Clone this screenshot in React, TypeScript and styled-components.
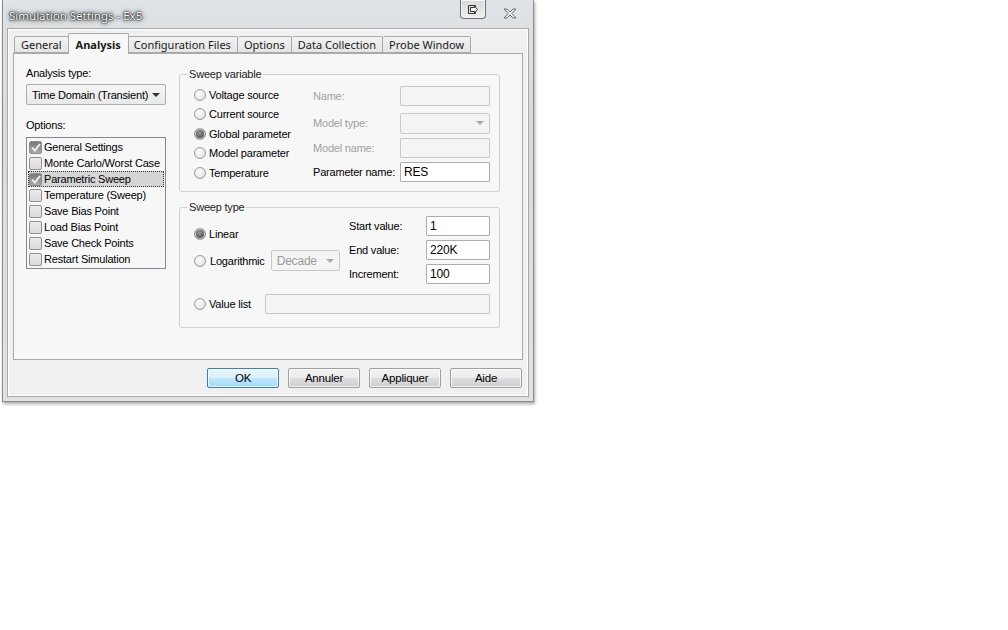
import styled, { createGlobalStyle } from "styled-components";

const Global = createGlobalStyle`
  html, body {
    margin: 0;
    background: #ffffff;
  }
  body {
    font-family: "Liberation Sans", Arial, sans-serif;
    font-size: 11px;
    letter-spacing: -0.2px;
    color: #000;
  }
`;

const UI = `"Noto Sans", "Open Sans", sans-serif`;

const Page = styled.div`
  width: 1008px;
  height: 630px;
  position: relative;
  overflow: hidden;
`;

const Window = styled.div`
  margin-left: 2px;
  width: 532px;
  height: 402px;
  display: flex;
  flex-direction: column;
  background: linear-gradient(180deg, #dfe2e6 0%, #d9dadc 30%, #e2e2e2 100%);
  border: 1px solid #8c8c8c;
  border-top: none;
  box-shadow: 1px 2px 3px rgba(0, 0, 0, 0.35);
  box-sizing: border-box;
`;

const TitleBar = styled.div`
  height: 28px;
  display: flex;
  align-items: center;
  padding: 0 0 0 6px;
`;

const Title = styled.div`
  font-family: ${UI};
  font-size: 11.5px;
  letter-spacing: 0;
  color: #ffffff;
  text-shadow: 0 0 1px #000, 0 0 2px #000, 0 0 4px rgba(0, 0, 0, 0.75),
    0 0 6px rgba(0, 0, 0, 0.4);
  padding-top: 2px;
`;

const TitleButtons = styled.div`
  margin-left: auto;
  display: flex;
  align-items: flex-start;
  align-self: flex-start;
  gap: 17px;
  padding-right: 16px;
`;

const ToolButton = styled.div`
  width: 26px;
  height: 19px;
  border: 1px solid #6e6e6e;
  border-top: none;
  border-radius: 0 0 4px 4px;
  background: linear-gradient(180deg, #d8d8d8, #eeeeee);
  box-sizing: border-box;
  display: flex;
  align-items: center;
  justify-content: center;
  box-shadow: inset 0 0 0 1px #f6f6f6;
`;

const CloseGlyph = styled.div`
  margin-top: 8px;
  width: 14px;
  height: 11px;
  display: flex;
`;

const Client = styled.div`
  flex: 1;
  margin: 0 4px 4px 4px;
  border: 1px solid #a8a8a8;
  background: #f0f0f0;
  display: flex;
  flex-direction: column;
  box-shadow: inset 0 0 0 1px #ffffff;
`;

const TabStrip = styled.div`
  display: flex;
  align-items: flex-end;
  height: 24px;
  padding-left: 6px;
`;

const Tab = styled.div<{ $active?: boolean }>`
  font-family: ${UI};
  font-size: 11px;
  letter-spacing: 0;
  color: #1a1a1a;
  height: ${(p) => (p.$active ? "21px" : "17px")};
  padding: 0 ${(p) => (p.$active ? "7px" : "6px")};
  margin: ${(p) => (p.$active ? "0 -1px -1px -1px" : "0")};
  display: flex;
  align-items: center;
  border: 1px solid #a9a9a9;
  border-bottom: ${(p) => (p.$active ? "none" : "1px solid #a9a9a9")};
  border-left: ${(p) => (p.$active ? "1px solid #a9a9a9" : "none")};
  border-radius: 2px 2px 0 0;
  background: ${(p) =>
    p.$active ? "#f7f7f7" : "linear-gradient(180deg, #f2f2f2, #e5e5e5)"};
  font-weight: ${(p) => (p.$active ? 700 : 400)};
  position: relative;
  z-index: ${(p) => (p.$active ? 2 : 1)};
  box-sizing: border-box;
  white-space: nowrap;
  &:first-child {
    border-left: 1px solid #a9a9a9;
  }
`;

const TabPanel = styled.div`
  margin: 0 5px;
  height: 307px;
  border: 1px solid #a9a9a9;
  background: #f7f7f7;
  box-sizing: border-box;
  display: flex;
  padding: 12px 0 0 12px;
  gap: 13px;
`;

const LeftCol = styled.div`
  width: 140px;
  display: flex;
  flex-direction: column;
`;

const Label = styled.div<{ $disabled?: boolean }>`
  color: ${(p) => (p.$disabled ? "#a0a0a0" : "#000")};
  white-space: nowrap;
`;

const Combo = styled.div<{ $w: number; $disabled?: boolean }>`
  width: ${(p) => p.$w}px;
  height: 21px;
  box-sizing: border-box;
  border: 1px solid ${(p) => (p.$disabled ? "#c9c9c9" : "#adadad")};
  border-radius: 2px;
  background: ${(p) =>
    p.$disabled ? "#f4f4f4" : "linear-gradient(180deg, #f6f6f6, #e9e9e9)"};
  display: flex;
  align-items: center;
  padding: 0 0 0 5px;
  color: ${(p) => (p.$disabled ? "#9a9a9a" : "#000")};
  font-size: ${(p) => (p.$disabled ? "12px" : "11px")};
  white-space: nowrap;
`;

const Arrow = styled.div<{ $disabled?: boolean }>`
  margin-left: auto;
  margin-right: 5px;
  flex-shrink: 0;
  width: 0;
  height: 0;
  border-left: 4px solid transparent;
  border-right: 4px solid transparent;
  border-top: 4px solid ${(p) => (p.$disabled ? "#a8a8a8" : "#333")};
`;

const ListBox = styled.div`
  margin-top: 6px;
  height: 132px;
  border: 1px solid #828790;
  background: #f7f7f7;
  box-sizing: border-box;
  padding: 1px 1px;
`;

const ListItem = styled.div<{ $selected?: boolean }>`
  height: 16px;
  display: flex;
  align-items: center;
  gap: 2px;
  padding-left: 1px;
  box-sizing: border-box;
  background: ${(p) => (p.$selected ? "#d6d6d6" : "transparent")};
  outline: ${(p) => (p.$selected ? "1px dotted #333" : "none")};
  outline-offset: -1px;
  white-space: nowrap;
`;

const CheckBox = styled.div<{ $checked?: boolean }>`
  width: 13px;
  height: 13px;
  box-sizing: border-box;
  border: 1px solid #8e8f8f;
  border-radius: 2px;
  background: ${(p) =>
    p.$checked
      ? "linear-gradient(180deg, #7a7a7a, #a9a9a9)"
      : "linear-gradient(180deg, #ebebeb, #dcdcdc)"};
  display: flex;
  align-items: center;
  justify-content: center;
  flex-shrink: 0;
`;

const RightCol = styled.div`
  width: 321px;
  display: flex;
  flex-direction: column;
  gap: 9px;
  padding-top: 2px;
`;

const Group = styled.fieldset<{ $h: number }>`
  margin: 0;
  height: ${(p) => p.$h}px;
  border: 1px solid #d0d0d0;
  border-radius: 3px;
  padding: 0 9px 0 14px;
  box-sizing: border-box;
  min-width: 0;
`;

const Legend = styled.legend`
  padding: 0 2px;
  margin-left: -7px;
  color: #222;
  font-size: 11px;
`;

const SweepVarBody = styled.div`
  display: flex;
  padding-top: 6px;
`;

const RadioCol = styled.div`
  width: 119px;
  display: flex;
  flex-direction: column;
  margin-top: -1px;
`;

const RadioRow = styled.div<{ $h?: number }>`
  height: ${(p) => p.$h ?? 19.5}px;
  display: flex;
  align-items: center;
  gap: 3px;
  white-space: nowrap;
`;

const Radio = styled.div<{ $on?: boolean }>`
  width: 12px;
  height: 12px;
  border-radius: 50%;
  border: 1px solid #9b9b9b;
  box-sizing: border-box;
  flex-shrink: 0;
  background: ${(p) =>
    p.$on
      ? "radial-gradient(circle at 45% 40%, #9a9a9a 0%, #5a5a5a 55%, #6f6f6f 100%)"
      : "radial-gradient(circle at 40% 35%, #ffffff 0%, #e8e8e8 60%, #d2d2d2 100%)"};
  box-shadow: ${(p) => (p.$on ? "inset 0 0 0 1px #d8d8d8" : "none")};
`;

const FieldCol = styled.div`
  display: flex;
  flex-direction: column;
  gap: 5px;
`;

const FieldRow = styled.div<{ $mt?: number }>`
  display: flex;
  align-items: center;
  height: 20px;
  margin-top: ${(p) => p.$mt ?? 0}px;
`;

const FieldLabel = styled(Label)<{ $w: number }>`
  width: ${(p) => p.$w}px;
`;

const TextBox = styled.div<{ $w: number; $disabled?: boolean }>`
  width: ${(p) => p.$w}px;
  height: 20px;
  box-sizing: border-box;
  border: 1px solid ${(p) => (p.$disabled ? "#c9c9c9" : "#abadb3")};
  background: ${(p) => (p.$disabled ? "#f4f4f4" : "#ffffff")};
  display: flex;
  align-items: center;
  padding-left: 3px;
  font-size: 12px;
  color: #000;
  border-radius: 1px;
`;

const SweepTypeBody = styled.div`
  display: flex;
  flex-direction: column;
`;

const SweepTypeTop = styled.div`
  display: flex;
  padding-top: 3px;
`;

const TypeLeft = styled.div`
  width: 155px;
  display: flex;
  flex-direction: column;
  padding-top: 9px;
`;

const TypeRight = styled.div`
  display: flex;
  flex-direction: column;
  gap: 4px;
`;

const ValueListRow = styled.div`
  display: flex;
  align-items: center;
  margin-top: 10px;
  gap: 3px;
`;

const ButtonRow = styled.div`
  display: flex;
  justify-content: flex-end;
  gap: 9px;
  padding: 8px 6px 0 0;
`;

const Button = styled.div<{ $default?: boolean }>`
  width: 72px;
  height: 20px;
  box-sizing: border-box;
  border: 1px solid ${(p) => (p.$default ? "#3c7fb1" : "#a0a0a0")};
  border-radius: 2px;
  background: ${(p) =>
    p.$default
      ? "linear-gradient(180deg, #eaf6fd 0%, #d9f0fc 50%, #bee6fd 51%, #a7d9f5 100%)"
      : "linear-gradient(180deg, #f2f2f2 0%, #ebebeb 50%, #dddddd 51%, #cfcfcf 100%)"};
  box-shadow: inset 0 0 0 1px rgba(255, 255, 255, 0.7);
  display: flex;
  align-items: center;
  justify-content: center;
  font-size: 11.5px;
  color: #000;
`;

const Tick = () => (
  <svg width="10" height="9" viewBox="0 0 10 9">
    <path d="M1 4.5 L3.8 7.5 L9 1" fill="none" stroke="#f2f2f2" strokeWidth="1.8" />
  </svg>
);

const options = [
  { label: "General Settings", checked: true },
  { label: "Monte Carlo/Worst Case" },
  { label: "Parametric Sweep", checked: true, selected: true },
  { label: "Temperature (Sweep)" },
  { label: "Save Bias Point" },
  { label: "Load Bias Point" },
  { label: "Save Check Points" },
  { label: "Restart Simulation" },
];

const tabs = [
  "General",
  "Analysis",
  "Configuration Files",
  "Options",
  "Data Collection",
  "Probe Window",
];

export default function App() {
  return (
    <Page>
      <Global />
      <Window>
        <TitleBar>
          <Title>Simulation Settings - Ex5</Title>
          <TitleButtons>
            <ToolButton>
              <svg width="12" height="11" viewBox="0 0 12 11">
                <path d="M8.5 3.5 V1.5 H1.5 V9.5 H8.5 V7.5" fill="none" stroke="#333" />
                <path d="M3.5 3.5 H7.5 V2 L10.5 5.5 L7.5 9 V7.5 H3.5 Z" fill="#f4f4f4" stroke="#333" />
              </svg>
            </ToolButton>
            <CloseGlyph>
              <svg width="14" height="11" viewBox="0 0 14 11">
                <path
                  d="M1 1 H4 L7 4 L10 1 H13 L9 5.5 L13 10 H10 L7 7 L4 10 H1 L5 5.5 Z"
                  fill="#ececec"
                  stroke="#6d6d6d"
                  strokeWidth="1"
                />
              </svg>
            </CloseGlyph>
          </TitleButtons>
        </TitleBar>

        <Client>
          <TabStrip>
            {tabs.map((t) => (
              <Tab key={t} $active={t === "Analysis"}>
                {t}
              </Tab>
            ))}
          </TabStrip>

          <TabPanel>
            <LeftCol>
              <Label style={{ marginTop: 1 }}>Analysis type:</Label>
              <Combo $w={140} style={{ marginTop: 5 }}>
                Time Domain (Transient)
                <Arrow />
              </Combo>
              <Label style={{ marginTop: 14 }}>Options:</Label>
              <ListBox>
                {options.map((o) => (
                  <ListItem key={o.label} $selected={o.selected}>
                    <CheckBox $checked={o.checked}>{o.checked && <Tick />}</CheckBox>
                    {o.label}
                  </ListItem>
                ))}
              </ListBox>
            </LeftCol>

            <RightCol>
              <Group $h={124}>
                <Legend>Sweep variable</Legend>
                <SweepVarBody>
                  <RadioCol>
                    <RadioRow>
                      <Radio />
                      Voltage source
                    </RadioRow>
                    <RadioRow>
                      <Radio />
                      Current source
                    </RadioRow>
                    <RadioRow>
                      <Radio $on />
                      Global parameter
                    </RadioRow>
                    <RadioRow>
                      <Radio />
                      Model parameter
                    </RadioRow>
                    <RadioRow>
                      <Radio />
                      Temperature
                    </RadioRow>
                  </RadioCol>
                  <FieldCol>
                    <FieldRow>
                      <FieldLabel $w={87} $disabled>
                        Name:
                      </FieldLabel>
                      <TextBox $w={90} $disabled />
                    </FieldRow>
                    <FieldRow $mt={2}>
                      <FieldLabel $w={87} $disabled>
                        Model type:
                      </FieldLabel>
                      <Combo $w={90} $disabled>
                        <Arrow $disabled />
                      </Combo>
                    </FieldRow>
                    <FieldRow>
                      <FieldLabel $w={87} $disabled>
                        Model name:
                      </FieldLabel>
                      <TextBox $w={90} $disabled />
                    </FieldRow>
                    <FieldRow $mt={-1}>
                      <FieldLabel $w={87}>Parameter name:</FieldLabel>
                      <TextBox $w={90}>RES</TextBox>
                    </FieldRow>
                  </FieldCol>
                </SweepVarBody>
              </Group>

              <Group $h={127}>
                <Legend>Sweep type</Legend>
                <SweepTypeBody>
                  <SweepTypeTop>
                    <TypeLeft>
                      <RadioRow $h={18}>
                        <Radio $on />
                        Linear
                      </RadioRow>
                      <RadioRow $h={21} style={{ marginTop: 7, gap: 4 }}>
                        <Radio />
                        Logarithmic
                        <Combo $w={69} $disabled style={{ marginLeft: 2 }}>
                          Decade
                          <Arrow $disabled />
                        </Combo>
                      </RadioRow>
                    </TypeLeft>
                    <TypeRight>
                      <FieldRow>
                        <FieldLabel $w={77}>Start value:</FieldLabel>
                        <TextBox $w={64}>1</TextBox>
                      </FieldRow>
                      <FieldRow>
                        <FieldLabel $w={77}>End value:</FieldLabel>
                        <TextBox $w={64}>220K</TextBox>
                      </FieldRow>
                      <FieldRow>
                        <FieldLabel $w={77}>Increment:</FieldLabel>
                        <TextBox $w={64}>100</TextBox>
                      </FieldRow>
                    </TypeRight>
                  </SweepTypeTop>
                  <ValueListRow>
                    <Radio />
                    <span style={{ width: 53 }}>Value list</span>
                    <TextBox $w={225} $disabled />
                  </ValueListRow>
                </SweepTypeBody>
              </Group>
            </RightCol>
          </TabPanel>

          <ButtonRow>
            <Button $default>OK</Button>
            <Button>Annuler</Button>
            <Button>Appliquer</Button>
            <Button>Aide</Button>
          </ButtonRow>
        </Client>
      </Window>
    </Page>
  );
}
